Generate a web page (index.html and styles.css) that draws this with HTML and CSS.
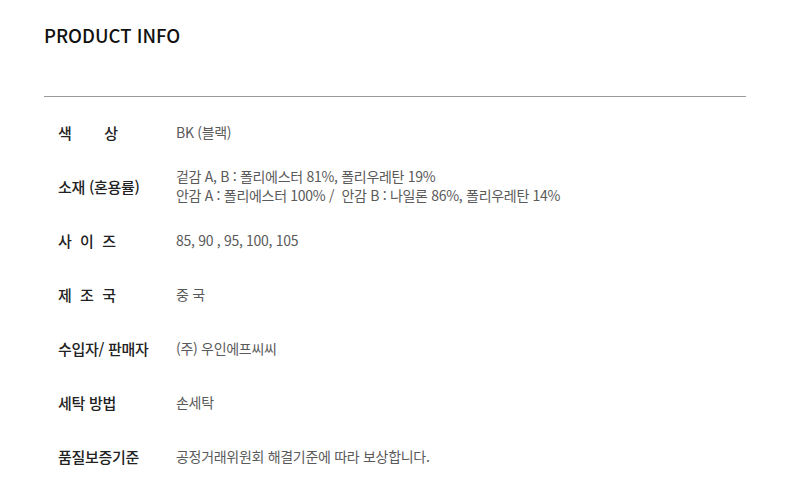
FILE: index.html
```html
<!DOCTYPE html>
<html lang="ko">
<head>
<meta charset="utf-8">
<link rel="stylesheet" href="styles.css">
</head>
<body>
<div class="wrap">
  <h2 class="title">PRODUCT INFO</h2>
  <div class="rule"></div>
  <dl class="info">
    <div class="row">
      <dt class="label"><span class="spread w60"><span>색</span><span>상</span></span></dt>
      <dd class="value">BK (블랙)</dd>
    </div>
    <div class="row">
      <dt class="label">소재 (혼용률)</dt>
      <dd class="value">겉감 A, B : 폴리에스터 81%, 폴리우레탄 19%<br>안감 A : 폴리에스터 100% /&nbsp; 안감 B : 나일론 86%, 폴리우레탄 14%</dd>
    </div>
    <div class="row">
      <dt class="label"><span class="spread w58"><span>사</span><span>이</span><span>즈</span></span></dt>
      <dd class="value">85, 90 , 95, 100, 105</dd>
    </div>
    <div class="row">
      <dt class="label"><span class="spread w58"><span>제</span><span>조</span><span>국</span></span></dt>
      <dd class="value">중 국</dd>
    </div>
    <div class="row">
      <dt class="label">수입자/ 판매자</dt>
      <dd class="value">(주) 우인에프씨씨</dd>
    </div>
    <div class="row">
      <dt class="label">세탁 방법</dt>
      <dd class="value">손세탁</dd>
    </div>
    <div class="row">
      <dt class="label">품질보증기준</dt>
      <dd class="value">공정거래위원회 해결기준에 따라 보상합니다.</dd>
    </div>
  </dl>
</div>
</body>
</html>
```
FILE: styles.css
```css
html, body {
  margin: 0;
  padding: 0;
  background: #fff;
}
body {
  font-family: "Noto Sans CJK KR", "Noto Sans", sans-serif;
  color: #222;
}
.wrap {
  width: 702px;
  padding: 22px 0 0 44px;
}
.title {
  margin: 0;
  font-size: 18.5px;
  font-weight: 500;
  line-height: 26px;
  letter-spacing: 0;
  color: #111;
}
.rule {
  margin-top: 48px;
  height: 1px;
  background: #9a9a9a;
}
.info {
  margin: 0;
  padding: 8px 0 0 14px;
}
.row {
  display: flex;
  align-items: center;
  height: 54px;
}
.label {
  width: 118px;
  flex: none;
  font-size: 15px;
  font-weight: 500;
  letter-spacing: -0.3px;
  color: #222;
}
.spread {
  display: inline-flex;
  justify-content: space-between;
  letter-spacing: 0;
}
.w60 { width: 60px; }
.w58 { width: 58px; }
.value {
  margin: 0;
  font-size: 14px;
  line-height: 19px;
  letter-spacing: -0.3px;
  color: #5a5a5a;
}
```
